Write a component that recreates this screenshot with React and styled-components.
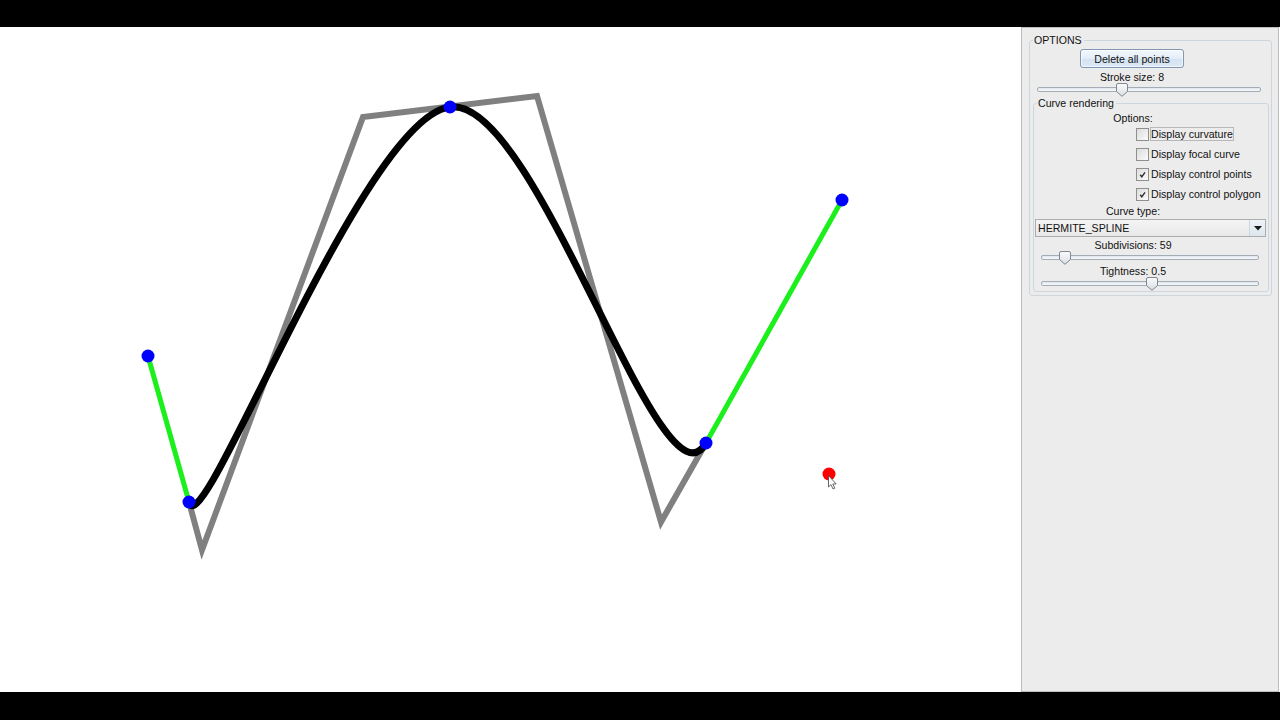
import React from 'react';
import styled, { createGlobalStyle } from 'styled-components';

const GlobalStyle = createGlobalStyle`
  html, body {
    margin: 0;
    padding: 0;
    background: #000;
  }
  * {
    box-sizing: border-box;
  }
`;

const Screen = styled.div`
  width: 1280px;
  height: 720px;
  display: flex;
  flex-direction: column;
  background: #000;
  font-family: "Liberation Sans", Arial, sans-serif;
  font-size: 10.6px;
  color: #111;
  overflow: hidden;
`;

const LetterBar = styled.div`
  height: ${p => p.h}px;
  flex: none;
  background: #000;
`;

const Workspace = styled.div`
  height: 665px;
  flex: none;
  display: flex;
  background: #fff;
`;

const Canvas = styled.div`
  width: 1021px;
  flex: none;
  background: #fff;

  svg {
    display: block;
  }
`;

const Panel = styled.aside`
  width: 258px;
  flex: none;
  background: #ececec;
  border: 1px solid #bdbdbd;
  padding: 6px 6px 0 7px;
`;

const Group = styled.fieldset`
  margin: ${p => p.top || 0}px 0 0 0;
  padding: ${p => p.pad};
  border: 1px solid #cdd6dd;
  border-radius: 3px;
  display: flex;
  flex-direction: column;
  min-width: 0;
`;

const Legend = styled.legend`
  margin-left: ${p => p.offset}px;
  padding: 0 2px 0 1px;
  line-height: 13px;
  font-size: 10.6px;
  color: #111;
`;

const Caption = styled.div`
  width: 198px;
  height: 12px;
  line-height: 12px;
  text-align: center;
  margin-top: ${p => p.top || 0}px;
`;

const ButtonHolder = styled.div`
  width: 198px;
  display: flex;
  justify-content: center;
  margin-top: 2px;
`;

const PushButton = styled.button`
  width: 104px;
  height: 19px;
  padding: 0;
  font-family: inherit;
  font-size: 10.6px;
  color: #111;
  border: 1px solid #8097b1;
  border-radius: 3px;
  background: linear-gradient(#f3f8fd 0%, #e3edf8 50%, #d3e2f2 51%, #dce8f5 100%);
  box-shadow: inset 0 0 0 1px rgba(255, 255, 255, 0.6);
`;

const SliderRow = styled.div`
  height: ${p => p.h || 14}px;
  margin: ${p => p.inset};
  display: flex;
  align-items: center;
`;

const Track = styled.div`
  position: relative;
  flex: 1;
  height: 5px;
  border: 1px solid #a4acb5;
  border-radius: 2px;
  background: linear-gradient(#dfe6ee, #f8fafc);
`;

const ThumbMark = styled.svg`
  position: absolute;
  top: -5px;
  width: 12px;
  height: 14px;
  margin-left: -6px;
`;

const Slider = ({ value, inset, h }) => (
  <SliderRow inset={inset} h={h}>
    <Track>
      <ThumbMark viewBox="0 0 12 14" style={{ left: `${value * 100}%` }}>
        <defs>
          <linearGradient id="thumbFill" x1="0" y1="0" x2="0" y2="1">
            <stop offset="0" stopColor="#fbfbfb" />
            <stop offset="1" stopColor="#d9dde2" />
          </linearGradient>
        </defs>
        <path
          d="M0.5 2 Q0.5 0.5 2 0.5 H10 Q11.5 0.5 11.5 2 V8.5 L6 13.3 L0.5 8.5 Z"
          fill="url(#thumbFill)"
          stroke="#7d8892"
        />
      </ThumbMark>
    </Track>
  </SliderRow>
);

const CheckList = styled.div`
  margin: 0 0 0 102px;
  display: flex;
  flex-direction: column;
`;

const CheckRow = styled.div`
  height: 20px;
  display: flex;
  align-items: center;
  gap: 1px;
`;

const CheckBox = styled.span`
  width: 13px;
  height: 13px;
  flex: none;
  border: 1px solid #8f8f8f;
  background: linear-gradient(135deg, #dcdcdc, #fbfbfb);
  display: flex;
  align-items: center;
  justify-content: center;
`;

const CheckLabel = styled.span`
  padding: 0;
  line-height: 12px;
  border: 1px solid ${p => (p.focused ? '#b8b8b8' : 'transparent')};
  white-space: nowrap;
`;

const Check = ({ label, checked, focused }) => (
  <CheckRow>
    <CheckBox>
      {checked && (
        <svg width="9" height="9" viewBox="0 0 9 9">
          <path d="M2.2 4.8 L3.8 6.8 L7 2.4" fill="none" stroke="#2a2a2a" strokeWidth="1.4" />
        </svg>
      )}
    </CheckBox>
    <CheckLabel focused={focused}>{label}</CheckLabel>
  </CheckRow>
);

const Combo = styled.div`
  height: 18px;
  margin: 2px 2px 0 1px;
  display: flex;
  border: 1px solid #acacac;
  background: linear-gradient(#f4f4f4, #e8e8e8);
`;

const ComboText = styled.span`
  flex: 1;
  padding-left: 2px;
  line-height: 16px;
`;

const ComboArrow = styled.span`
  width: 16px;
  border-left: 1px solid #cfd6dc;
  background: linear-gradient(#eef3f8, #dde6ee);
  display: flex;
  align-items: center;
  justify-content: center;
`;

const points = [
  [148, 356],
  [189, 502],
  [450, 107],
  [706, 443],
  [842, 200],
];

const polygon = '189,502 202,550 363,117 537,96 661,522 706,443';
const curve = 'M189 502 C202 550 363 117 450 107 C537 96 661 522 706 443';

const Drawing = () => (
  <svg width="1021" height="665" viewBox="0 27 1021 665">
    <polyline points={polygon} fill="none" stroke="#808080" strokeWidth="6" strokeLinejoin="miter" />
    <line x1="148" y1="356" x2="189" y2="502" stroke="#1cf01c" strokeWidth="5" />
    <line x1="706" y1="443" x2="842" y2="200" stroke="#1cf01c" strokeWidth="5" />
    <path d={curve} fill="none" stroke="#000" strokeWidth="7" strokeLinecap="round" />
    {points.map(([x, y]) => (
      <circle key={`${x}-${y}`} cx={x} cy={y} r="6.5" fill="#0000ff" />
    ))}
    <circle cx="829" cy="474" r="6.5" fill="#ff0000" />
    <path
      d="M828.5 475.5 L828.5 487 L831 484.6 L833 489 L834.8 488.2 L832.8 484 L836.2 484 Z"
      fill="#fff"
      stroke="#444"
      strokeWidth="0.8"
    />
  </svg>
);

const App = () => (
  <Screen>
    <GlobalStyle />
    <LetterBar h={27} />
    <Workspace>
      <Canvas>
        <Drawing />
      </Canvas>
      <Panel>
        <Group pad="0 2px 3px 3px">
          <Legend offset={0}>OPTIONS</Legend>
          <ButtonHolder>
            <PushButton>Delete all points</PushButton>
          </ButtonHolder>
          <Caption top={3}>Stroke size: 8</Caption>
          <Slider value={0.378} inset="0 8px 0 4px" h={12} />
          <Group pad="0 0 1px 0" top={2}>
            <Legend offset={3}>Curve rendering</Legend>
            <Caption top={2}>Options:</Caption>
            <CheckList>
              <Check label="Display curvature" focused />
              <Check label="Display focal curve" />
              <Check label="Display control points" checked />
              <Check label="Display control polygon" checked />
            </CheckList>
            <Caption top={1}>Curve type:</Caption>
            <Combo>
              <ComboText>HERMITE_SPLINE</ComboText>
              <ComboArrow>
                <svg width="8" height="5" viewBox="0 0 8 5">
                  <path d="M0 0 H8 L4 4.5 Z" fill="#1a1a1a" />
                </svg>
              </ComboArrow>
            </Combo>
            <Caption top={2}>Subdivisions: 59</Caption>
            <Slider value={0.106} inset="0 9px 0 7px" h={13} />
            <Caption top={1}>Tightness: 0.5</Caption>
            <Slider value={0.507} inset="0 9px 0 7px" h={13} />
          </Group>
        </Group>
      </Panel>
    </Workspace>
    <LetterBar h={28} />
  </Screen>
);

export default App;
